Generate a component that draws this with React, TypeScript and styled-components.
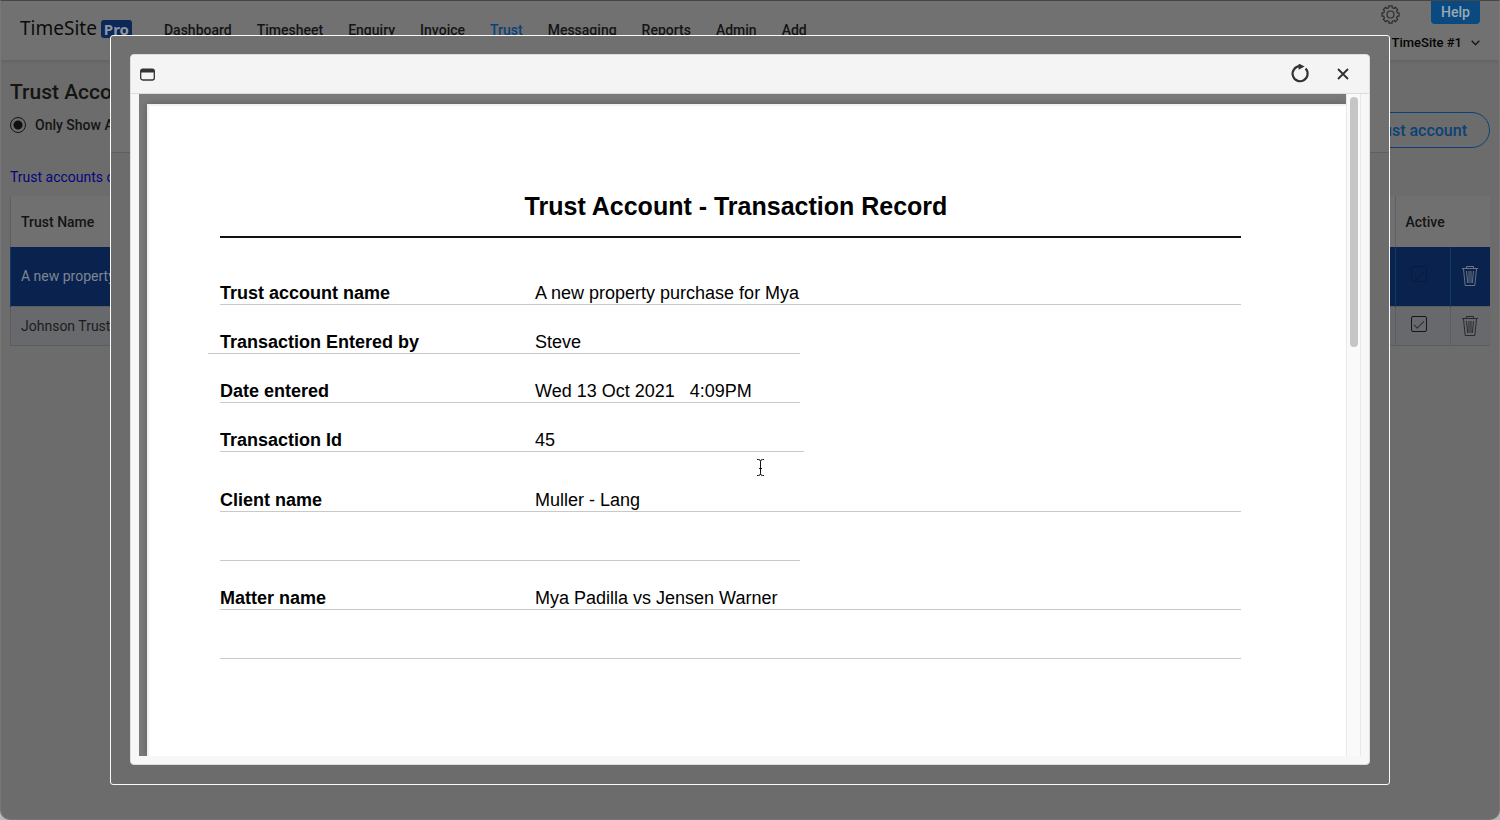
import React from "react";
import styled, { createGlobalStyle, css } from "styled-components";

const GlobalStyle = createGlobalStyle`
  *, *::before, *::after { box-sizing: border-box; }
  html { background: #b9b9b9; }
  body { margin: 0; font-family: Roboto, sans-serif; font-size: 14px; color: #141414; }
  button, input { font: inherit; color: inherit; }
`;

const Page = styled.div`
  min-height: 100vh;
  background: #6c6c6c;
  border: 1px solid #777;
  border-top-color: #454545;
  border-radius: 0 0 10px 10px;
  overflow: hidden;
`;

const TopBar = styled.header`
  display: flex;
  align-items: flex-start;
  height: 59px;
  padding: 0 0 0 19px;
  background: #717171;
  box-shadow: 0 1px 4px rgba(0, 0, 0, 0.12);
`;

const Logo = styled.a`
  display: flex;
  align-items: center;
  gap: 4px;
  margin-top: 18px;
  color: #0b0b0b;
  font-size: 19px;
  line-height: 19px;
  font-family: "Noto Sans", sans-serif;
  text-decoration: none;
`;

const LogoBadge = styled.span`
  padding: 0 3px;
  border-radius: 3px;
  background: #0b2858;
  color: #8f959f;
  font-size: 15px;
  line-height: 18px;
  font-weight: 700;
`;

const Nav = styled.nav`
  display: flex;
  gap: 25px;
  margin: 19px 0 0 32px;
`;

const NavLink = styled.a<{ $active?: boolean }>`
  color: ${(p) => (p.$active ? "#0a4278" : "#141414")};
  font-weight: 500;
  line-height: 20px;
  text-decoration: none;
`;

const Account = styled.div`
  display: flex;
  flex-direction: column;
  align-items: flex-end;
  gap: 9px;
  margin-left: auto;
  padding-right: 19px;
`;

const AccountTools = styled.div`
  display: flex;
  align-items: flex-end;
  gap: 31px;
`;

const HelpButton = styled.button`
  width: 49px;
  height: 23px;
  padding: 0 0 2px;
  border: 0;
  border-radius: 0 0 4px 4px;
  background: #0a4a80;
  color: #9aa8b4;
  font-weight: 500;
  line-height: 20px;
`;

const IconButton = styled.button`
  display: grid;
  place-items: center;
  padding: 0;
  border: 0;
  background: none;
`;

const SiteButton = styled.button`
  display: flex;
  align-items: center;
  gap: 9px;
  padding: 0;
  border: 0;
  background: none;
  color: #050505;
  font-size: 13px;
  font-weight: 500;
  line-height: 20px;
`;

const Content = styled.main`
  padding: 20px 9px 0;
`;

const Intro = styled.div`
  display: flex;
  justify-content: space-between;
  align-items: flex-end;
`;

const Heading = styled.h1`
  margin: 0 0 11px;
  font-size: 21px;
  font-weight: 500;
  line-height: 24px;
`;

const Choice = styled.label`
  display: flex;
  align-items: center;
  gap: 9px;
  font-weight: 500;
  line-height: 20px;
`;

const Radio = styled.input`
  appearance: none;
  width: 16px;
  height: 16px;
  margin: 0;
  border: 1px solid #141414;
  border-radius: 50%;
  background: radial-gradient(circle, #101010 4px, transparent 5px);
`;

const OutlineButton = styled.button`
  height: 36px;
  padding: 0 22px;
  margin-bottom: -13px;
  border: 1px solid #0a4278;
  border-radius: 18px;
  background: none;
  color: #0a4278;
  font-size: 16px;
  font-weight: 500;
`;

const TextLink = styled.a`
  display: block;
  margin: 32px 0 9px;
  color: #06067c;
  line-height: 20px;
  text-decoration: none;
`;

const TrustTable = styled.table`
  width: 100%;
  border-collapse: collapse;
  table-layout: fixed;
  border-left: 1px solid #5f6061;
`;

const HeadCell = styled.th<{ $width?: number }>`
  width: ${(p) => (p.$width ? `${p.$width}px` : "auto")};
  height: 51px;
  padding: 0 10px;
  border-left: ${(p) => (p.$width === 40 ? "0" : "1px solid #5f6061")};
  background: #707070;
  font-weight: 500;
  text-align: left;
`;

const Row = styled.tr<{ $selected?: boolean }>`
  height: ${(p) => (p.$selected ? 59 : 39)}px;
  background: ${(p) => (p.$selected ? "#0a234e" : "#67696c")};
  color: ${(p) => (p.$selected ? "#7d8694" : "#1c1c1c")};
  border-bottom: 1px solid #5b5e61;
`;

const Cell = styled.td<{ $selected?: boolean; $center?: boolean }>`
  padding: ${(p) => (p.$center ? "0" : "0 10px")};
  border-left: 1px solid ${(p) => (p.$selected ? "#0d3a66" : "#5b5e61")};
  & > button { margin: 0 auto; }
`;

const Tick = styled.input<{ $faded?: boolean }>`
  appearance: none;
  display: grid;
  place-items: center;
  width: 16px;
  height: 16px;
  margin: 0 0 4px 15px;
  border: 1px solid ${(p) => (p.$faded ? "#0a1a3a" : "#161616")};
  border-radius: 2px;
  &:checked::before {
    content: "";
    width: 10px;
    height: 5px;
    border: solid ${(p) => (p.$faded ? "#0a1c40" : "#303030")};
    border-width: 0 0 1px 1px;
    transform: rotate(-45deg);
  }
`;

const Frame = styled.div`
  position: fixed;
  inset: 35px 110px 35px;
  display: flex;
  padding: 18px 19px 19px;
  border: 1px solid #fafafa;
  border-radius: 3px;
  background: linear-gradient(#707070 116px, #606060 116px, #606060 117px, #6c6c6c 117px);
`;

const Dialog = styled.section`
  display: flex;
  flex: 1;
  flex-direction: column;
  min-width: 0;
  border: 1px solid #ddd;
  border-radius: 4px;
  background: #f7f7f7;
  overflow: hidden;
`;

const DialogBar = styled.div`
  display: flex;
  align-items: center;
  flex: none;
  height: 39px;
  padding: 0 17px 0 9px;
  border-bottom: 1px solid #dcdcdc;
  background: #f4f4f4;
  color: #303030;
`;

const DialogActions = styled.div`
  display: flex;
  gap: 24px;
  margin-left: auto;
`;

const Viewer = styled.div`
  display: flex;
  flex: 1;
  min-height: 0;
  margin: 0 8px 8px;
`;

const Pane = styled.div`
  flex: 1;
  min-width: 0;
  padding: 10px 0 0 8px;
  background: #7b7b7b;
  overflow: hidden;
`;

const Track = styled.div`
  flex: none;
  width: 15px;
  padding: 3px 3px 0;
  border: solid #e8e8e8;
  border-width: 0 1px;
  background: #fafafa;
`;

const Thumb = styled.div`
  width: 8px;
  height: 38%;
  border-radius: 4px;
  background: #c6c6c6;
`;

const Paper = styled.article`
  min-height: 100%;
  padding: 84px 105px 0 71px;
  border: solid #f1f1f1;
  border-width: 2px 0 0 2px;
  background: #fff;
  box-shadow: 0 0 8px rgba(0, 0, 0, 0.25);
  color: #000;
  font-family: "Liberation Sans", Arial, sans-serif;
  font-size: 18px;
`;

const PaperTitle = styled.h2`
  margin: 0;
  padding: 0 0 14px 11px;
  border-bottom: 2px solid #111;
  font-size: 25px;
  line-height: 32px;
  text-align: center;
`;

const Fields = styled.dl`
  margin: 18px 0 0;
`;

const Field = styled.div<{ $width?: number; $outdent?: boolean; $spaced?: boolean }>`
  display: grid;
  grid-template-columns: 315px 1fr;
  align-items: end;
  width: ${(p) => (p.$width ? `${p.$width}px` : "auto")};
  height: 49px;
  margin-top: ${(p) => (p.$spaced ? "11px" : "0")};
  padding-bottom: 1px;
  border-bottom: 1px solid #c9c9c9;
  line-height: 20px;
  ${(p) =>
    p.$outdent &&
    css`
      margin-left: -12px;
      padding-left: 12px;
    `}
`;

const FieldName = styled.dt`
  font-weight: 700;
`;

const FieldValue = styled.dd`
  margin: 0;
  white-space: pre;
`;

const TextCursor = styled.svg`
  position: absolute;
  left: 645px;
  top: 423px;
`;

const navItems = ["Dashboard", "Timesheet", "Enquiry", "Invoice", "Trust", "Messaging", "Reports", "Admin", "Add"];

const fields = [
  { name: "Trust account name", value: "A new property purchase for Mya" },
  { name: "Transaction Entered by", value: "Steve", outdent: true, width: 592 },
  { name: "Date entered", value: "Wed 13 Oct 2021\u00a0\u00a0 4:09PM", width: 580 },
  { name: "Transaction Id", value: "45", width: 584 },
  { name: "Client name", value: "Muller - Lang", spaced: true },
  { name: "", value: "", width: 580 },
  { name: "Matter name", value: "Mya Padilla vs Jensen Warner" },
  { name: "", value: "" },
];

const gearPath = (() => {
  const points: string[] = [];
  const teeth = 8;
  for (let i = 0; i < teeth; i++) {
    const base = (i * 2 * Math.PI) / teeth;
    [[-0.24, 7], [-0.2, 8.7], [0.2, 8.7], [0.24, 7]].forEach(([offset, radius]) => {
      points.push(`${9.5 + radius * Math.sin(base + offset)},${9.5 - radius * Math.cos(base + offset)}`);
    });
  }
  return `M${points.join("L")}Z`;
})();

const GearIcon = () => (
  <svg width="19" height="19" viewBox="0 0 19 19" fill="none" stroke="#2c2c2c" strokeWidth="1.2" strokeLinejoin="round">
    <path d={gearPath} />
    <circle cx="9.5" cy="9.5" r="3.5" />
  </svg>
);

const TrashIcon = ({ color }: { color: string }) => (
  <svg width="18" height="22" viewBox="0 0 18 22" fill="none" stroke={color}>
    <path d="M1 3.5H17M5.5 3V1.5H12.5V3M2.5 4L4.2 20.5H13.8L15.5 4M5.5 6L6.7 18M8 6V18M10 6V18M12.5 6L11.3 18" />
  </svg>
);

export default function App() {
  return (
    <>
      <GlobalStyle />
      <Page>
        <TopBar>
          <Logo href="#">
            TimeSite<LogoBadge>Pro</LogoBadge>
          </Logo>
          <Nav>
            {navItems.map((item) => (
              <NavLink key={item} href="#" $active={item === "Trust"}>
                {item}
              </NavLink>
            ))}
          </Nav>
          <Account>
            <AccountTools>
              <IconButton aria-label="Settings">
                <GearIcon />
              </IconButton>
              <HelpButton>Help</HelpButton>
            </AccountTools>
            <SiteButton>
              TimeSite #1
              <svg width="9" height="6" viewBox="0 0 9 6" fill="none" stroke="#141414" strokeWidth="1.3">
                <path d="M0.7 0.8L4.5 4.7L8.3 0.8" />
              </svg>
            </SiteButton>
          </Account>
        </TopBar>
        <Content>
          <Intro>
            <div>
              <Heading>Trust Accounts</Heading>
              <Choice>
                <Radio type="radio" name="filter" defaultChecked />
                Only Show Active
              </Choice>
            </div>
            <OutlineButton>Add trust account</OutlineButton>
          </Intro>
          <TextLink href="#">Trust accounts overview</TextLink>
          <TrustTable>
            <thead>
              <tr>
                <HeadCell>Trust Name</HeadCell>
                <HeadCell $width={55}>Active</HeadCell>
                <HeadCell $width={40} aria-label="Delete" />
              </tr>
            </thead>
            <tbody>
              <Row $selected>
                <Cell $selected>A new property purchase for Mya</Cell>
                <Cell $selected $center>
                  <Tick type="checkbox" aria-label="Active" $faded defaultChecked disabled />
                </Cell>
                <Cell $selected $center>
                  <IconButton aria-label="Delete">
                    <TrashIcon color="#6c7480" />
                  </IconButton>
                </Cell>
              </Row>
              <Row>
                <Cell>Johnson Trust</Cell>
                <Cell $center>
                  <Tick type="checkbox" aria-label="Active" defaultChecked />
                </Cell>
                <Cell $center>
                  <IconButton aria-label="Delete">
                    <TrashIcon color="#2a2a2a" />
                  </IconButton>
                </Cell>
              </Row>
            </tbody>
          </TrustTable>
        </Content>
      </Page>
      <Frame>
        <Dialog role="dialog" aria-label="Transaction record">
          <DialogBar>
            <IconButton aria-label="Window">
              <svg width="15" height="13" viewBox="0 0 15 13" fill="none">
                <rect x="0.7" y="1.2" width="13.6" height="10.8" rx="2" stroke="#333" strokeWidth="1.3" />
                <path d="M0.7 4.5V3a2 2 0 0 1 2-2h9.6a2 2 0 0 1 2 2v1.5z" fill="#333" />
              </svg>
            </IconButton>
            <DialogActions>
              <IconButton aria-label="Reload">
                <svg width="20" height="20" viewBox="0 0 20 20" fill="none">
                  <path d="M15.6 4.6A7.5 7.5 0 1 1 9.8 2.2" stroke="#333" strokeWidth="2.2" />
                  <path d="M8.6 -0.6L14.6 2.6L8.6 5.8Z" fill="#333" />
                </svg>
              </IconButton>
              <IconButton aria-label="Close">
                <svg width="18" height="18" viewBox="0 0 18 18" stroke="#303030" strokeWidth="1.8">
                  <path d="M4 4L14 14M14 4L4 14" />
                </svg>
              </IconButton>
            </DialogActions>
          </DialogBar>
          <Viewer>
            <Pane>
              <Paper>
                <PaperTitle>Trust Account - Transaction Record</PaperTitle>
                <Fields>
                  {fields.map((field, index) => (
                    <Field key={index} $width={field.width} $outdent={field.outdent} $spaced={field.spaced}>
                      <FieldName>{field.name}</FieldName>
                      <FieldValue>{field.value}</FieldValue>
                    </Field>
                  ))}
                </Fields>
              </Paper>
            </Pane>
            <Track>
              <Thumb />
            </Track>
          </Viewer>
        </Dialog>
        <TextCursor width="9" height="17" viewBox="0 0 9 17" fill="none" stroke="#111">
          <path d="M1 0.5H2.5Q4.5 0.5 4.5 2.5V14.5Q4.5 16.5 2.5 16.5H1M8 0.5H6.5Q4.5 0.5 4.5 2.5M8 16.5H6.5Q4.5 16.5 4.5 14.5M3 9.5H6" />
        </TextCursor>
      </Frame>
    </>
  );
}
